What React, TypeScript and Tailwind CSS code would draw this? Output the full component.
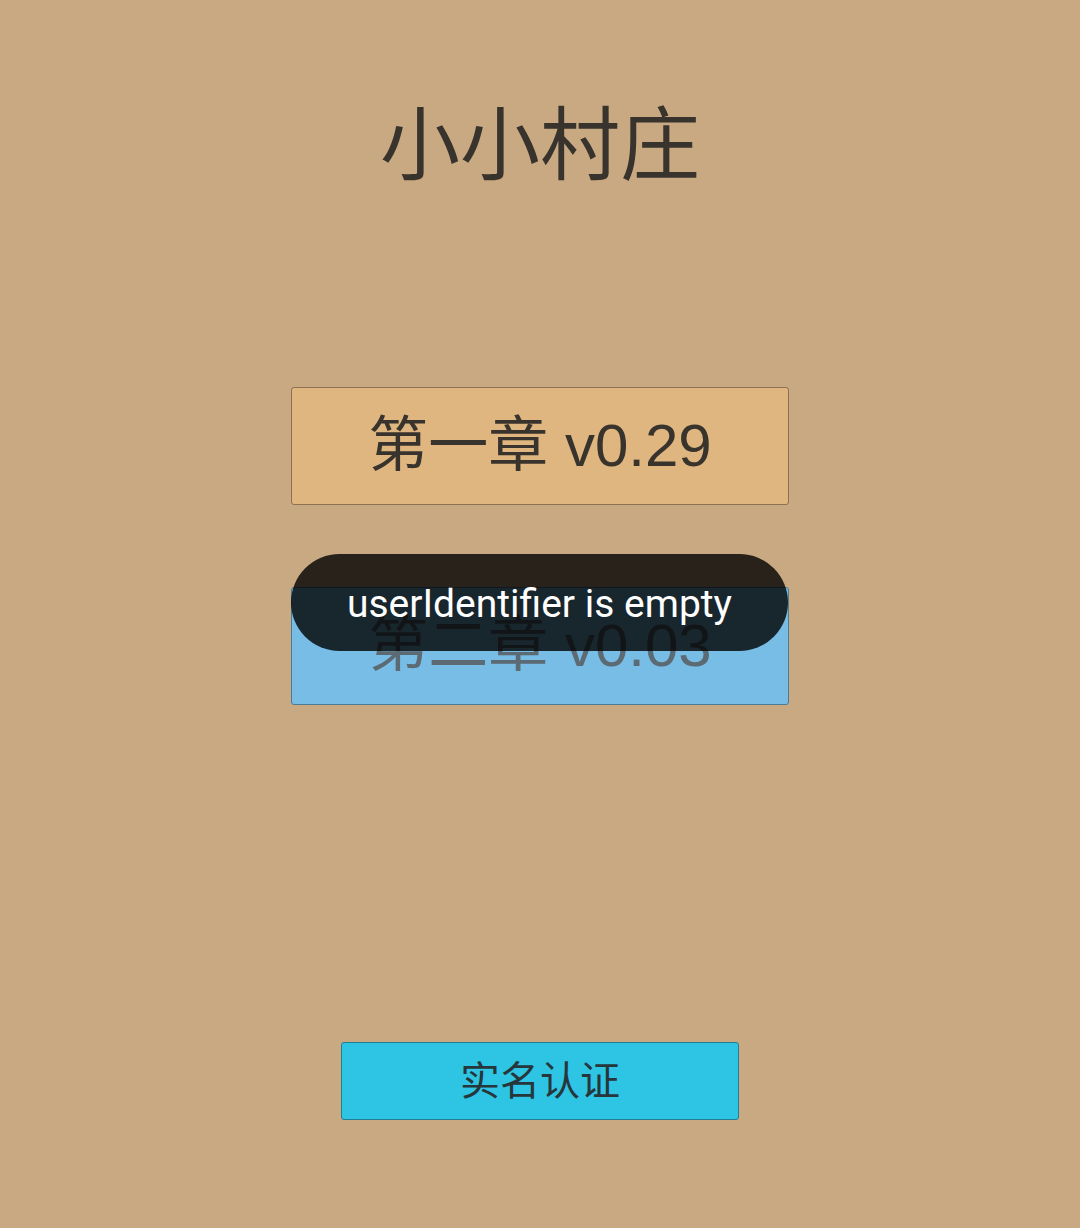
export default function App() {
  return (
    <div
      className="min-h-screen w-full bg-[#c9a982] flex flex-col items-center"
      style={{ fontFamily: '"Liberation Sans", "Noto Sans CJK SC", sans-serif' }}
    >
      <h1 className="mt-[97px] text-[80px] leading-[97px] text-[#38332d]">小小村庄</h1>

      <button className="mt-[193px] w-[498px] h-[118px] rounded-[3px] border border-[#8c7052] bg-[#dfb67f] text-[60px] text-[#38332d]">
        第一章 v0.29
      </button>

      <div className="relative mt-[82px]">
        <button className="w-[498px] h-[118px] rounded-[3px] border border-[#4d7b94] bg-[#77bde6] text-[60px] text-[#5c6a73]">
          第二章 v0.03
        </button>
        {/* toast overlay */}
        <div className="absolute left-0 top-[-33px] w-[497px] h-[97px] rounded-full bg-black/80 flex items-center justify-center">
          <span
            className="text-white text-[39px] leading-none mt-[4px]"
            style={{ fontFamily: 'Roboto, sans-serif' }}
          >
            userIdentifier is empty
          </span>
        </div>
      </div>

      <button className="mt-[337px] w-[398px] h-[78px] rounded-[3px] border border-[#1f7f96] bg-[#2ec4e4] text-[40px] text-[#26363b]">
        实名认证
      </button>
    </div>
  );
}
